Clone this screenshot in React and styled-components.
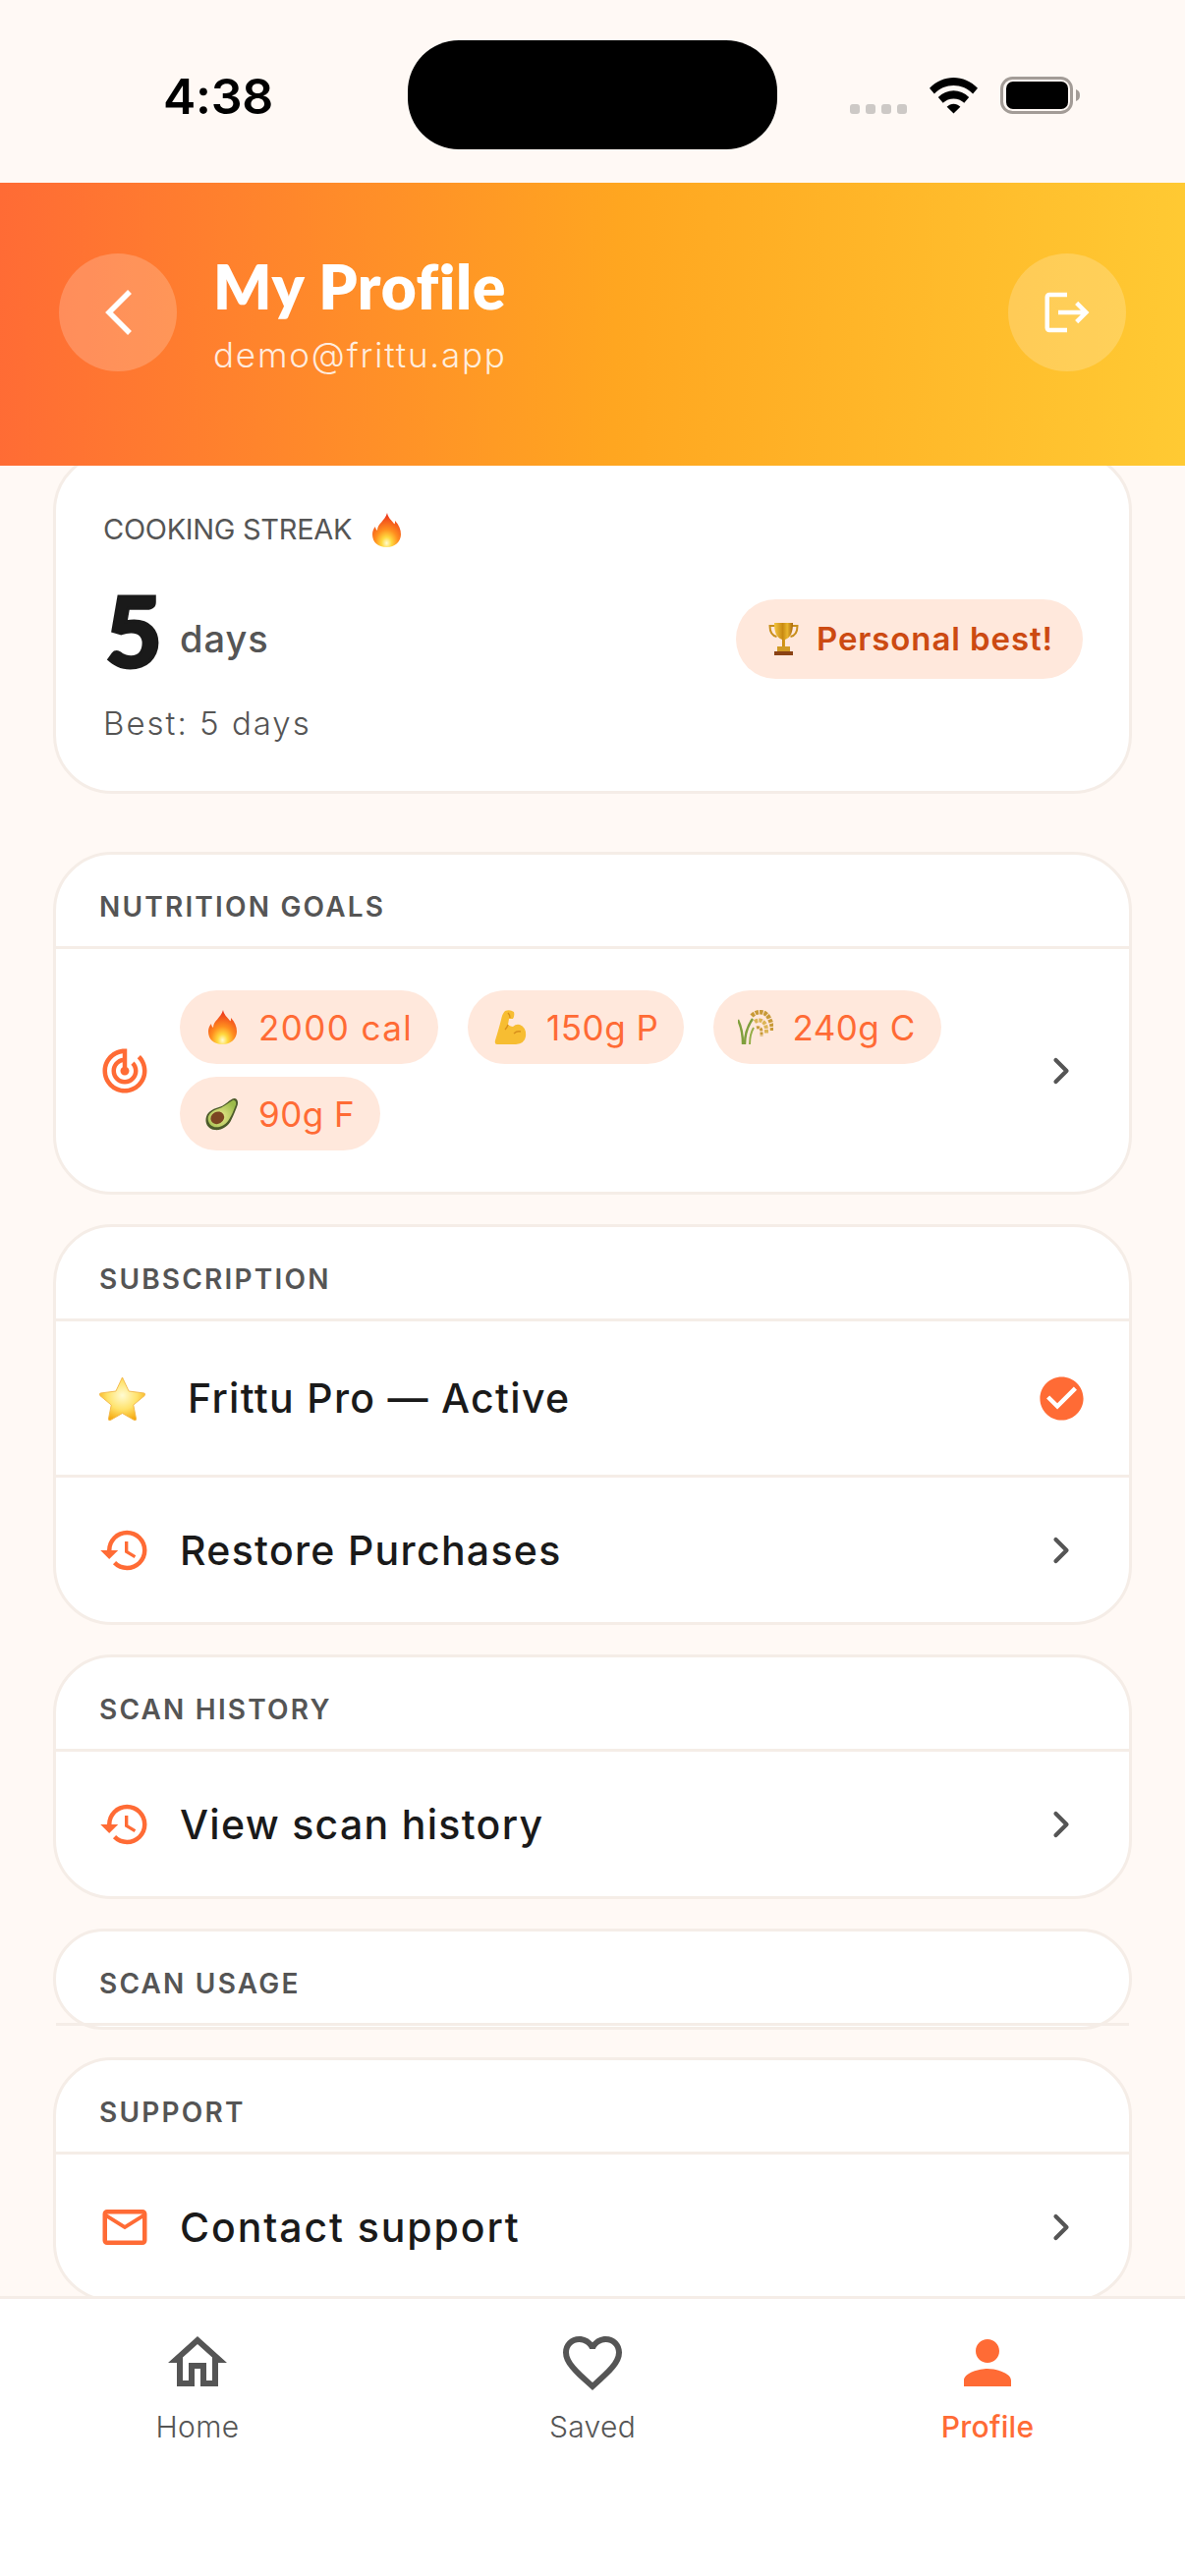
import React from 'react';
import styled, { createGlobalStyle } from 'styled-components';
import {
  MdOutlineHome,
  MdFavoriteBorder,
  MdPerson,
  MdHistory,
  MdMailOutline,
  MdTrackChanges,
  MdCheckCircle,
  MdLogout,
} from 'react-icons/md';
import { ChevronRight } from 'lucide-react';

const GlobalStyle = createGlobalStyle`
  * { box-sizing: border-box; }
  html, body { margin: 0; padding: 0; background: #fff9f5; }
  body { font-family: "Inter", "Liberation Sans", sans-serif; }
  svg { flex: none; }
`;

const Screen = styled.div`
  width: 1206px;
  height: 2622px;
  display: flex;
  flex-direction: column;
  background: #fff9f5;
  overflow: hidden;
`;

const StatusBar = styled.div`
  height: 186px;
  flex: none;
  display: grid;
  grid-template-columns: 415px 376px 1fr;
  align-items: start;
`;

const Time = styled.div`
  font-size: 50px;
  font-weight: 600;
  line-height: 50px;
  color: #000;
  padding: 73px 0 0 166px;
  letter-spacing: -0.3px;
`;

const Island = styled.div`
  height: 111px;
  margin-top: 41px;
  background: #000;
  border-radius: 52px;
`;

const StatusIcons = styled.div`
  display: flex;
  align-items: flex-end;
  padding: 78px 0 0 74px;
`;

const SignalDots = styled.div`
  display: flex;
  gap: 6px;
  margin-right: 23px;
`;

const SignalDot = styled.span`
  width: 10px;
  height: 10px;
  border-radius: 3px;
  background: #cdc9c6;
`;

const BatteryMark = styled.svg`
  margin-left: 23px;
`;

const Header = styled.header`
  height: 288px;
  flex: none;
  position: relative;
  z-index: 2;
  display: flex;
  align-items: flex-start;
  padding: 72px 60px 0;
  background: linear-gradient(92deg, #ff6b35 0%, #ffa620 52%, #ffca33 100%);
`;

const RoundButton = styled.div`
  width: 120px;
  height: 120px;
  border-radius: 50%;
  flex: none;
  display: flex;
  align-items: center;
  justify-content: center;
  color: #fff;
  background: rgba(255, 255, 255, 0.2);
`;

const TitleBlock = styled.div`
  flex: 1;
  margin-top: -3px;
  padding-left: 37px;
`;

const Title = styled.h1`
  margin: 0;
  font-family: "Lato", sans-serif;
  font-size: 62px;
  font-weight: 800;
  line-height: 72px;
  letter-spacing: 0.7px;
  color: #fff;
`;

const Email = styled.div`
  font-size: 35px;
  font-weight: 300;
  line-height: 44px;
  margin-top: 12px;
  letter-spacing: 1.8px;
  color: rgba(255, 255, 255, 0.85);
`;

const Scroll = styled.main`
  flex: 1;
  min-height: 0;
  overflow: hidden;
  padding: 0 54px;
  display: flex;
  flex-direction: column;
`;

const Card = styled.section`
  flex: none;
  height: ${(p) => p.$height}px;
  margin-bottom: ${(p) => p.$gap}px;
  background: #fff;
  border: 3px solid #f5ede7;
  border-radius: 60px;
`;

const StreakCard = styled(Card)`
  margin-top: -14px;
  padding: 56px 47px 0 48px;
`;

const StreakLabel = styled.div`
  display: flex;
  align-items: center;
  gap: 21px;
  font-size: 29px;
  font-weight: 400;
  line-height: 40px;
  letter-spacing: -0.3px;
  color: #555;
`;

const StreakRow = styled.div`
  display: flex;
  align-items: center;
  justify-content: space-between;
  margin-top: 33px;
`;

const StreakCount = styled.div`
  display: flex;
  align-items: center;
  gap: 19px;
`;

const StreakNumber = styled.span`
  font-family: "Lato", sans-serif;
  font-size: 100px;
  font-weight: 900;
  line-height: 96px;
  margin: 0 -1px 20px 2px;
  color: #1a1a1a;
  -webkit-text-stroke: 3px #1a1a1a;
`;

const StreakUnit = styled.span`
  font-size: 38px;
  font-weight: 500;
  letter-spacing: 1px;
  color: #555;
`;

const BestBadge = styled.div`
  display: flex;
  align-items: center;
  gap: 18px;
  height: 81px;
  padding: 0 30px 0 33px;
  border-radius: 41px;
  background: #ffe8dc;
  font-size: 33px;
  font-weight: 600;
  letter-spacing: 0.9px;
  color: #cc4a12;
`;

const BestText = styled.div`
  margin-top: 6px;
  font-size: 33px;
  font-weight: 300;
  line-height: 44px;
  letter-spacing: 2px;
  color: #555;
`;

const SectionLabel = styled.div`
  height: 96px;
  padding: 13px 0 0 44px;
  display: flex;
  align-items: center;
  font-size: 28px;
  font-weight: 600;
  letter-spacing: 2.2px;
  color: #555;
  border-bottom: 3px solid #f5ede7;
`;

const Row = styled.div`
  height: ${(p) => p.$height}px;
  display: flex;
  align-items: center;
  padding: 0 47px 0 45px;
  border-bottom: ${(p) => (p.$line ? '3px solid #f5ede7' : 'none')};
`;

const RowIcon = styled.div`
  width: 50px;
  flex: none;
  display: flex;
  justify-content: center;
  color: #ff6b35;
`;

const RowText = styled.div`
  flex: 1;
  padding-left: ${(p) => p.$inset || 31}px;
  font-size: 41px;
  font-weight: 500;
  letter-spacing: ${(p) => p.$spacing || 1.3}px;
  color: #1a1a1a;
`;

const RowEnd = styled.div`
  width: 44px;
  flex: none;
  display: flex;
  justify-content: center;
  color: ${(p) => p.$color || '#555'};
`;

const Pills = styled.div`
  flex: 1;
  display: flex;
  flex-wrap: wrap;
  gap: 13px 30px;
  padding-left: 31px;
`;

const Pill = styled.div`
  height: 75px;
  padding: 0 26px;
  display: flex;
  align-items: center;
  gap: 20px;
  border-radius: 38px;
  background: #ffe8dc;
  font-size: 35px;
  font-weight: 400;
  letter-spacing: ${(p) => p.$spacing || 0.5}px;
  color: #ff6b35;
`;

const PillEmoji = styled.span`
  width: 34px;
  flex: none;
  display: flex;
  justify-content: center;
`;

const StarMark = styled.svg`
  margin-right: 6px;
`;

const TabBar = styled.nav`
  height: 285px;
  flex: none;
  position: relative;
  z-index: 2;
  display: grid;
  grid-template-columns: repeat(3, 1fr);
  align-items: start;
  padding-top: 29px;
  background: #fff;
  border-top: 3px solid #f5ede7;
`;

const Tab = styled.div`
  display: flex;
  flex-direction: column;
  align-items: center;
  gap: 9px;
  font-size: 30px;
  line-height: 40px;
  font-weight: ${(p) => (p.$active ? 500 : 300)};
  letter-spacing: 0.3px;
  color: ${(p) => (p.$active ? '#ff6b35' : '#555')};
`;

const Flame = () => (
  <svg width="29" height="35" viewBox="0 0 29 35">
    <defs>
      <radialGradient id="flameFill" cx="0.5" cy="0.88" r="0.8">
        <stop offset="0" stopColor="#fffbd0" />
        <stop offset="0.22" stopColor="#ffd93f" />
        <stop offset="0.5" stopColor="#ff8f1f" />
        <stop offset="1" stopColor="#ee3a1c" />
      </radialGradient>
    </defs>
    <path
      d="M15 0c1 5 4 7 7 11 1 1 1-1 1-3 4 4 6 9 6 14 0 7-6 13-14.500 13S0 30 0 22c0-3 1-6 3-8 0 2 1 3 2 4 0-7 8-10 10-18z"
      fill="url(#flameFill)"
    />
  </svg>
);

const Trophy = () => (
  <svg width="31" height="33" viewBox="0 0 31 33">
    <defs>
      <linearGradient id="trophyGold" x1="0" y1="0" x2="1" y2="0">
        <stop offset="0" stopColor="#f4c63f" />
        <stop offset="0.45" stopColor="#c98a12" />
        <stop offset="0.7" stopColor="#e9b52d" />
        <stop offset="1" stopColor="#a9660b" />
      </linearGradient>
    </defs>
    <path d="M7 3H1.500c0 6 2 10 7 11M24 3h5.500c0 6-2 10-7 11" fill="none" stroke="#c98f1c" strokeWidth="2" />
    <path d="M6 0h19c0 9-2 15-8 17v7h-3v-7C8 15 6 9 6 0z" fill="url(#trophyGold)" />
    <rect x="9" y="24" width="13" height="5" fill="#d19a25" />
    <rect x="6" y="29" width="19" height="4" fill="#8a4215" />
  </svg>
);

const Muscle = () => (
  <svg width="33" height="35" viewBox="0 0 33 35">
    <path
      d="M11 1Q16-1 20 2q1 4-1 7h-4l-1 6q3 2 5 2 3-3 7-2 7 3 6 12-1 7-10 8H3q-3 0-2-4Q5 18 7 10q1-6 4-9z"
      fill="#f7bd32"
    />
    <path d="M14 3q2 2 2 5M14 15q-1 3-3 5M20 24q3-3 7-2" fill="none" stroke="#d8901b" strokeWidth="1.400" />
  </svg>
);

const Rice = () => (
  <svg width="36" height="35" viewBox="0 0 36 35">
    <path d="M5 35C5 26 4 18 0 10M7 35c0-9 3-19 8-26" fill="none" stroke="#7f9f3c" strokeWidth="2.400" />
    <path d="M12 35c0-7 1-12 4-17" fill="none" stroke="#94ad47" strokeWidth="2" />
    <path d="M14 6c6-6 15-5 18 3 2 4 3 7 3 12" fill="none" stroke="#c89a38" strokeWidth="4.500" strokeDasharray="3.500 1" />
    <path d="M17 12c5-3 9-1 11 3 1 3 1 6 1 9" fill="none" stroke="#dcb455" strokeWidth="4" strokeDasharray="3.500 1" />
    <path d="M19 18c3-1 5 1 5 4l0 5" fill="none" stroke="#c89a38" strokeWidth="3" strokeDasharray="3 1" />
  </svg>
);

const Avocado = () => (
  <svg width="34" height="36" viewBox="0 0 36 36">
    <defs>
      <radialGradient id="avoFlesh" cx="0.45" cy="0.6" r="0.6">
        <stop offset="0" stopColor="#e9e88d" />
        <stop offset="1" stopColor="#9cbb4a" />
      </radialGradient>
    </defs>
    <path
      d="M31 1c4 0 5 5 3 9-2 5-3 8-6 14-3 7-11 12-18 11-7-1-11-7-9-14 2-7 9-9 15-11 6-2 10-8 15-9z"
      fill="#4c5a2a"
    />
    <path
      d="M30 3c3 0 4 4 2 7-2 5-3 8-6 13-3 6-10 10-16 9-5-1-8-6-7-11 2-6 8-8 14-10 5-2 9-6 13-8z"
      fill="url(#avoFlesh)"
    />
    <ellipse cx="13" cy="22" rx="7.500" ry="6.500" transform="rotate(-30 13 22)" fill="#7b4522" />
  </svg>
);

const Star = () => (
  <StarMark width="47" height="45" viewBox="0 0 50 48">
    <defs>
      <radialGradient id="starFill" cx="0.5" cy="0.42" r="0.6">
        <stop offset="0" stopColor="#fffbd2" />
        <stop offset="0.55" stopColor="#ffe26a" />
        <stop offset="1" stopColor="#f5a80f" />
      </radialGradient>
    </defs>
    <path
      d="M25 1l7 15 16 2c2 0 2 2 1 3L37 31l3 15c0 2-1 2-3 1l-12-7-12 7c-2 1-3 1-3-1l3-15L1 21c-1-1-1-3 1-3l16-2z"
      fill="url(#starFill)"
      stroke="#f2b84a"
      strokeWidth="1"
    />
  </StarMark>
);

const BackChevron = () => (
  <svg width="30" height="46" viewBox="0 0 30 46" fill="none" stroke="#fff" strokeWidth="5.500">
    <path d="M27 2L6 23l21 21" />
  </svg>
);

const Wifi = () => (
  <svg width="49" height="38" viewBox="0 0 50 38">
    <path d="M0 11.500C14-3 36-3 50 11.500l-5 6C34 6 16 6 5 17.500z" />
    <path d="M9 21c9-9 23-9 32 0l-5 6c-6-6-16-6-22 0z" />
    <path d="M18 31c4-4 10-4 14 0l-7 7z" />
  </svg>
);

const Battery = () => (
  <BatteryMark width="82" height="38" viewBox="0 0 82 38">
    <rect x="1.500" y="1.500" width="71" height="35" rx="11" fill="none" stroke="#a39c97" strokeWidth="3" />
    <rect x="6" y="5" width="63" height="28" rx="7" fill="#000" />
    <path d="M77 13c3 1 4 3 4 6s-1 5-4 6z" fill="#a39c97" />
  </BatteryMark>
);

const Chevron = () => (
  <RowEnd>
    <ChevronRight size={44} strokeWidth={2.3} />
  </RowEnd>
);

export default function App() {
  return (
    <Screen>
      <GlobalStyle />
      <StatusBar>
        <Time>4:38</Time>
        <Island />
        <StatusIcons>
          <SignalDots>
            <SignalDot />
            <SignalDot />
            <SignalDot />
            <SignalDot />
          </SignalDots>
          <Wifi />
          <Battery />
        </StatusIcons>
      </StatusBar>

      <Header>
        <RoundButton>
          <BackChevron />
        </RoundButton>
        <TitleBlock>
          <Title>My Profile</Title>
          <Email>demo@frittu.app</Email>
        </TitleBlock>
        <RoundButton>
          <MdLogout size={54} />
        </RoundButton>
      </Header>

      <Scroll>
        <StreakCard $height={348} $gap={59}>
          <StreakLabel>
            COOKING STREAK
            <Flame />
          </StreakLabel>
          <StreakRow>
            <StreakCount>
              <StreakNumber>5</StreakNumber>
              <StreakUnit>days</StreakUnit>
            </StreakCount>
            <BestBadge>
              <Trophy />
              Personal best!
            </BestBadge>
          </StreakRow>
          <BestText>Best: 5 days</BestText>
        </StreakCard>

        <Card $height={349} $gap={30}>
          <SectionLabel>NUTRITION GOALS</SectionLabel>
          <Row $height={247}>
            <RowIcon><MdTrackChanges size={54} /></RowIcon>
            <Pills>
              <Pill $spacing={1.4}><PillEmoji><Flame /></PillEmoji>2000 cal</Pill>
              <Pill><PillEmoji><Muscle /></PillEmoji>150g P</Pill>
              <Pill><PillEmoji><Rice /></PillEmoji>240g C</Pill>
              <Pill><PillEmoji><Avocado /></PillEmoji>90g F</Pill>
            </Pills>
            <Chevron />
          </Row>
        </Card>

        <Card $height={408} $gap={30}>
          <SectionLabel>SUBSCRIPTION</SectionLabel>
          <Row $height={159} $line>
            <RowIcon><Star /></RowIcon>
            <RowText $inset={39}>Frittu Pro — Active</RowText>
            <RowEnd $color="#ff6b35"><MdCheckCircle size={53} /></RowEnd>
          </Row>
          <Row $height={147}>
            <RowIcon><MdHistory size={54} /></RowIcon>
            <RowText>Restore Purchases</RowText>
            <Chevron />
          </Row>
        </Card>

        <Card $height={249} $gap={30}>
          <SectionLabel>SCAN HISTORY</SectionLabel>
          <Row $height={147}>
            <RowIcon><MdHistory size={54} /></RowIcon>
            <RowText>View scan history</RowText>
            <Chevron />
          </Row>
        </Card>

        <Card $height={103} $gap={28}>
          <SectionLabel>SCAN USAGE</SectionLabel>
        </Card>

        <Card $height={249} $gap={30}>
          <SectionLabel>SUPPORT</SectionLabel>
          <Row $height={147}>
            <RowIcon><MdMailOutline size={54} /></RowIcon>
            <RowText $spacing={1.9}>Contact support</RowText>
            <Chevron />
          </Row>
        </Card>
      </Scroll>

      <TabBar>
        <Tab>
          <MdOutlineHome size={72} />
          Home
        </Tab>
        <Tab>
          <MdFavoriteBorder size={72} />
          Saved
        </Tab>
        <Tab $active>
          <MdPerson size={72} />
          Profile
        </Tab>
      </TabBar>
    </Screen>
  );
}
